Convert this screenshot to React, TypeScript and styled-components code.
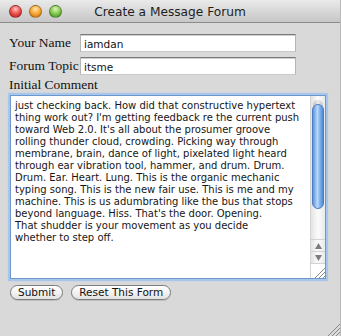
import React from 'react'
import styled, { createGlobalStyle } from 'styled-components'

// line breaks follow the wrapping seen in the screenshot
const COMMENT = [
  'just checking back. How did that constructive hypertext',
  "thing work out? I'm getting feedback re the current push",
  "toward Web 2.0. It's all about the prosumer groove",
  'rolling thunder cloud, crowding. Picking way through',
  'membrane, brain, dance of light, pixelated light heard',
  'through ear vibration tool, hammer, and drum. Drum.',
  'Drum. Ear. Heart. Lung. This is the organic mechanic',
  'typing song. This is the new fair use. This is me and my',
  'machine. This is us adumbrating like the bus that stops',
  "beyond language. Hiss. That's the door. Opening.",
  'That shudder is your movement as you decide',
  'whether to step off.',
].join('\n')

const UI_FONT = "'DejaVu Sans', Verdana, sans-serif"

const GlobalStyle = createGlobalStyle`
  html, body {
    margin: 0;
    padding: 0;
    background: #d9d9d9;
  }
  * {
    box-sizing: border-box;
  }
`

const lightColors = {
  red: ['#ffc4c0', '#ee4f4d', '#b01a1a'],
  orange: ['#ffe6ad', '#f7a634', '#c2680a'],
  green: ['#dcf7b8', '#84c84e', '#3b8a18'],
}

type LightColor = keyof typeof lightColors

const Window = styled.div`
  width: 341px;
  height: 336px;
  display: flex;
  flex-direction: column;
  background: #d9d9d9;
  border-right: 1px solid #b9b9b9;
  overflow: hidden;
`

const TitleBar = styled.div`
  height: 23px;
  flex: none;
  display: grid;
  grid-template-columns: 1fr auto 1fr;
  align-items: center;
  background: linear-gradient(#eaeaea, #d4d4d4 60%, #c7c7c7);
  border-bottom: 1px solid #8c8c8c;
`

const Lights = styled.div`
  display: flex;
  gap: 7px;
  padding-left: 9px;
  padding-top: 1px;
`

const Light = styled.span<{ $color: LightColor }>`
  width: 13px;
  height: 13px;
  border-radius: 50%;
  border: 1px solid rgba(0, 0, 0, 0.3);
  background: ${({ $color }) => {
    const [hi, mid, lo] = lightColors[$color]
    return `radial-gradient(circle at 50% 28%, ${hi} 0%, ${mid} 50%, ${lo} 100%)`
  }};
`

const Title = styled.div`
  font-family: ${UI_FONT};
  font-size: 12.2px;
  color: #1e1e1e;
  padding-top: 1px;
`

const Content = styled.div`
  flex: 1;
  display: flex;
  flex-direction: column;
  padding: 11px 0 0 9px;
`

const FieldGrid = styled.div`
  display: grid;
  grid-template-columns: 71px 216px;
  row-gap: 5px;
  align-items: center;
`

const Label = styled.label`
  font-family: 'Liberation Serif', 'Times New Roman', serif;
  font-size: 13.5px;
  color: #111;
  white-space: nowrap;
`

const TextInput = styled.input`
  height: 18px;
  width: 216px;
  margin: 0;
  padding: 1px 3px 0;
  border: 1px solid;
  border-color: #7b7b7b #b5b5b5 #c9c9c9 #b5b5b5;
  box-shadow: inset 0 1px 0 #cfcfcf;
  background: #fff;
  font-family: ${UI_FONT};
  font-size: 10.5px;
  color: #111;
  outline: none;
  text-decoration: underline dotted #e0322f;
  text-underline-offset: 2px;
`

const CommentLabel = styled(Label)`
  display: block;
  margin-top: 1px;
  line-height: 17px;
`

const Frame = styled.div`
  margin: 2px 0 0 1px;
  width: 316px;
  height: 184px;
  display: flex;
  background: #fff;
  border: 1px solid #6e98cc;
  box-shadow: 0 0 1px 2px #a6c6ec;
`

const Comment = styled.textarea`
  flex: 1;
  margin: 0;
  padding: 4px 2px 4px 4px;
  border: none;
  outline: none;
  resize: none;
  overflow: hidden;
  white-space: pre;
  font-family: ${UI_FONT};
  font-size: 10px;
  line-height: 12px;
  color: #161616;
  background: transparent;
`

const ScrollColumn = styled.div`
  width: 15px;
  flex: none;
  display: flex;
  flex-direction: column;
  border-left: 1px solid #d4d4d4;
  background: linear-gradient(90deg, #e4e4e4, #fbfbfb 50%, #e9e9e9);
`

const Track = styled.div`
  flex: 1;
  display: flex;
  flex-direction: column;
  padding: 4px 1px 30px;
`

const TrackCap = styled.div`
  height: 9px;
  margin: 0 1px -5px;
  border-radius: 6px 6px 0 0;
  background: linear-gradient(90deg, #bdbdbd, #ececec 50%, #c4c4c4);
`

const Thumb = styled.div`
  flex: 1;
  border-radius: 7px;
  border: 1px solid #4b7cc4;
  background: linear-gradient(90deg, #5f96df, #bcd8f8 45%, #8ab7ee 65%, #4e88d8);
`

const ArrowButton = styled.div`
  height: 12px;
  flex: none;
  display: flex;
  align-items: center;
  justify-content: center;
  border-top: 1px solid #d2d2d2;
`

const Grip = styled.div`
  height: 15px;
  flex: none;
  display: flex;
  align-items: flex-end;
  justify-content: flex-end;
  border-top: 1px solid #d2d2d2;
  background: #fff;
`

const ButtonRow = styled.div`
  display: flex;
  gap: 8px;
  margin: 6px 0 0 1px;
`

const PillButton = styled.button`
  height: 15px;
  padding: 0 7px;
  margin: 0;
  border: 1px solid #7c7c7c;
  border-radius: 8px;
  background: linear-gradient(#ffffff, #f3f3f3 50%, #e2e2e2);
  box-shadow: 0 1px 0 rgba(0, 0, 0, 0.12);
  font-family: ${UI_FONT};
  font-size: 10.5px;
  line-height: 13px;
  color: #111;
`

const Footer = styled.div`
  margin-top: auto;
  display: flex;
  justify-content: flex-end;
`

const GripLines = ({ size }: { size: number }) => (
  <svg width={size} height={size} viewBox={`0 0 ${size} ${size}`}>
    {[0, 4, 8].map((o) => (
      <line key={o} x1={size} y1={o} x2={o} y2={size} stroke="#8a8a8a" strokeWidth="1" />
    ))}
  </svg>
)

export default function App() {
  return (
    <>
      <GlobalStyle />
      <Window>
        <TitleBar>
          <Lights>
            <Light $color="red" />
            <Light $color="orange" />
            <Light $color="green" />
          </Lights>
          <Title>Create a Message Forum</Title>
          <span />
        </TitleBar>

        <Content>
          <FieldGrid>
            <Label htmlFor="name">Your Name</Label>
            <TextInput id="name" defaultValue="iamdan" />
            <Label htmlFor="topic">Forum Topic</Label>
            <TextInput id="topic" defaultValue="itsme" />
          </FieldGrid>

          <CommentLabel htmlFor="comment">Initial Comment</CommentLabel>
          <Frame>
            <Comment id="comment" defaultValue={COMMENT} spellCheck={false} />
            <ScrollColumn>
              <Track>
                <TrackCap />
                <Thumb />
              </Track>
              <ArrowButton>
                <svg width="7" height="6" viewBox="0 0 7 6">
                  <polygon points="3.5,0 7,6 0,6" fill="#7d7d7d" />
                </svg>
              </ArrowButton>
              <ArrowButton>
                <svg width="7" height="6" viewBox="0 0 7 6">
                  <polygon points="0,0 7,0 3.5,6" fill="#7d7d7d" />
                </svg>
              </ArrowButton>
              <Grip>
                <GripLines size={10} />
              </Grip>
            </ScrollColumn>
          </Frame>

          <ButtonRow>
            <PillButton type="submit">Submit</PillButton>
            <PillButton type="reset">Reset This Form</PillButton>
          </ButtonRow>

          <Footer>
            <GripLines size={12} />
          </Footer>
        </Content>
      </Window>
    </>
  )
}
